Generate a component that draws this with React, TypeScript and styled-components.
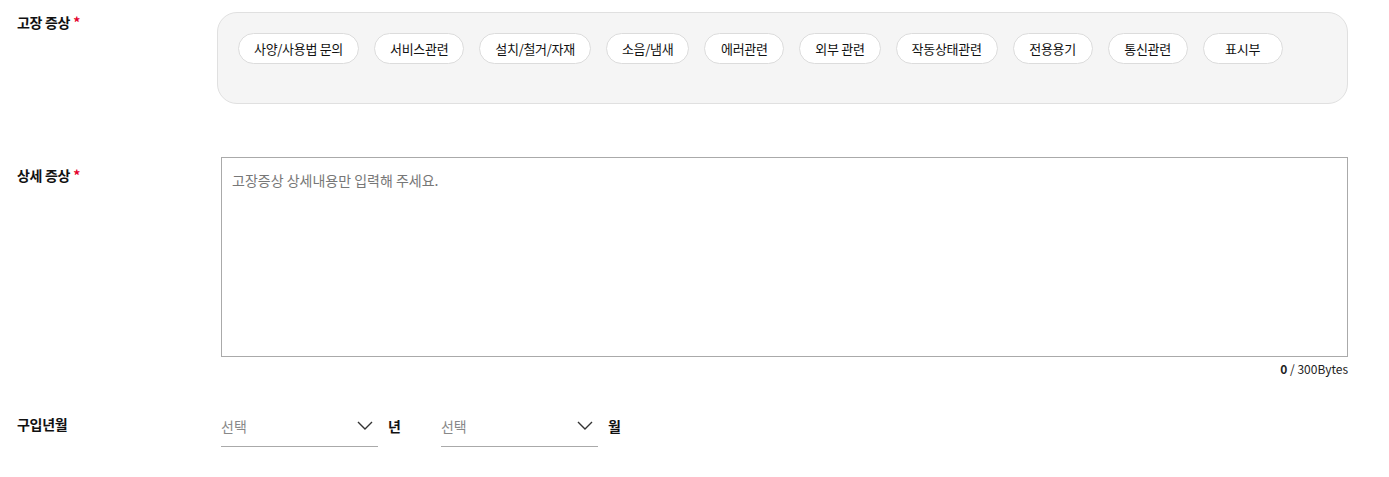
import { useState } from 'react'
import styled, { createGlobalStyle } from 'styled-components'

const GlobalStyle = createGlobalStyle`
  body {
    margin: 0;
    background: #fff;
    font-family: "Noto Sans CJK KR", "Noto Sans", sans-serif;
    color: #111;
  }
  * {
    box-sizing: border-box;
  }
`

const Page = styled.main`
  padding: 12px 41px 0 17px;
`
const Row = styled.section<{ $gap?: number }>`
  display: grid;
  grid-template-columns: 200px 1fr;
  margin-top: ${({ $gap }) => $gap || 0}px;
`
const Label = styled.h3<{ $top?: number }>`
  margin: 0;
  padding-top: ${({ $top }) => $top || 0}px;
  font-size: 14px;
  font-weight: bold;
  line-height: 20px;
  letter-spacing: -0.3px;
  span {
    color: #e4002b;
    margin-left: 3px;
  }
`
const Field = styled.div<{ $indent?: number }>`
  padding-left: ${({ $indent }) => $indent || 0}px;
`
const ChipBox = styled.div`
  display: flex;
  flex-wrap: wrap;
  gap: 15px;
  height: 92px;
  padding: 20px 20px;
  background-color: #f5f5f5;
  border: 1px solid #e0e0e0;
  border-radius: 20px;
  align-content: flex-start;
`
const Chip = styled.button`
  min-width: 80px;
  height: 31px;
  padding: 0 15px;
  border: 1px solid #dcdcdc;
  border-radius: 16px;
  background-color: #fff;
  font-family: inherit;
  font-size: 13px;
  color: #111;
  letter-spacing: -0.3px;
  cursor: pointer;
`
const TextArea = styled.textarea`
  display: block;
  width: 100%;
  height: 200px;
  padding: 12px 10px;
  border: 1px solid #aaa;
  resize: none;
  font-family: inherit;
  font-size: 14px;
  line-height: 20px;
  color: #111;
  outline: none;
  &::placeholder {
    color: #777;
  }
`
const Counter = styled.p`
  margin: 4px 0 0;
  text-align: right;
  font-size: 12px;
  line-height: 16px;
  color: #222;
  b {
    font-weight: bold;
  }
`
const DateRow = styled.div`
  display: flex;
  align-items: center;
`
const SelectBox = styled.div`
  display: flex;
  align-items: center;
  justify-content: space-between;
  width: 157px;
  height: 36px;
  padding: 0 5px 6px 0;
  border-bottom: 1px solid #aaa;
  font-size: 14px;
  color: #888;
  cursor: pointer;
`
const Unit = styled.span`
  margin: 0 40px 6px 10px;
  font-size: 14px;
  font-weight: bold;
  color: #111;
`

const symptoms = [
  '사양/사용법 문의',
  '서비스관련',
  '설치/철거/자재',
  '소음/냄새',
  '에러관련',
  '외부 관련',
  '작동상태관련',
  '전용용기',
  '통신관련',
  '표시부',
]

function Chevron() {
  return (
    <svg width="16" height="9" viewBox="0 0 16 9" fill="none">
      <path d="M1 1l7 7 7-7" stroke="#333" strokeWidth="1.4" />
    </svg>
  )
}

function App() {
  const [text, setText] = useState('')

  return (
    <>
      <GlobalStyle />
      <Page>
        <Row>
          <Label>
            고장 증상<span>*</span>
          </Label>
          <ChipBox>
            {symptoms.map((item) => (
              <Chip key={item}>{item}</Chip>
            ))}
          </ChipBox>
        </Row>
        <Row $gap={53}>
          <Label $top={8}>
            상세 증상<span>*</span>
          </Label>
          <Field $indent={4}>
            <TextArea
              value={text}
              onChange={(e) => setText(e.target.value)}
              placeholder="고장증상 상세내용만 입력해 주세요."
            />
            <Counter>
              <b>0</b> / 300Bytes
            </Counter>
          </Field>
        </Row>
        <Row $gap={34}>
          <Label $top={3}>구입년월</Label>
          <Field $indent={4}>
            <DateRow>
              <SelectBox>
                선택
                <Chevron />
              </SelectBox>
              <Unit>년</Unit>
              <SelectBox>
                선택
                <Chevron />
              </SelectBox>
              <Unit>월</Unit>
            </DateRow>
          </Field>
        </Row>
      </Page>
    </>
  )
}

export default App
